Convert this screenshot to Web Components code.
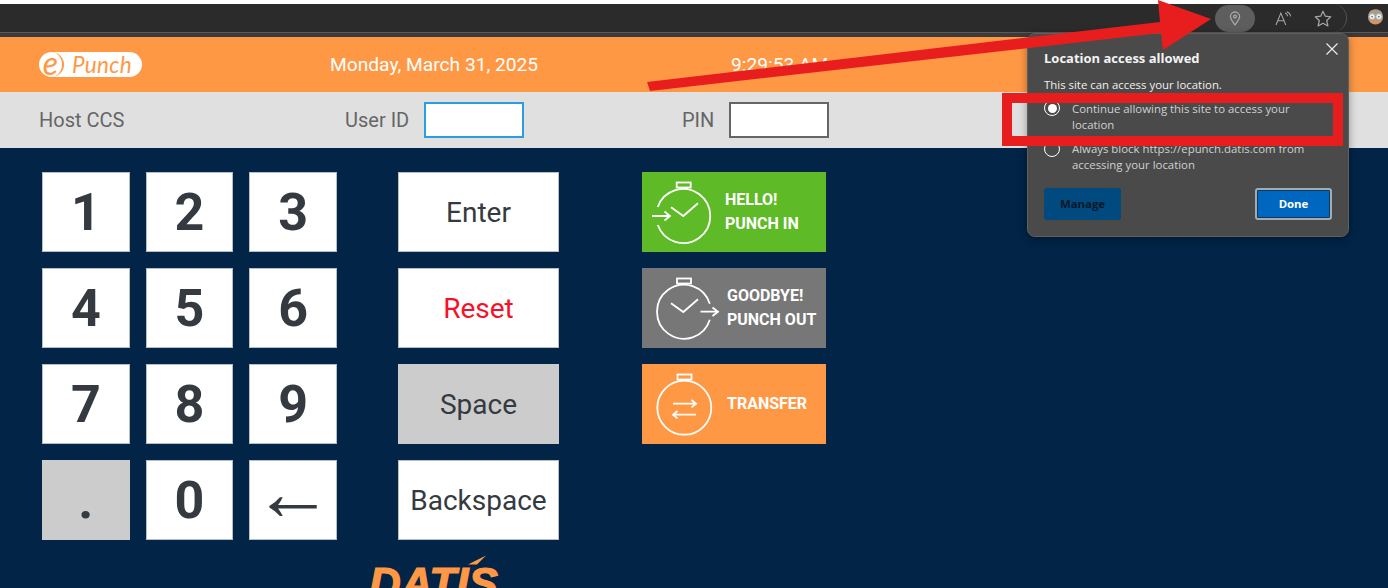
<!DOCTYPE html>
<html><head><meta charset="utf-8">
<style>
html,body{margin:0;padding:0;height:588px;overflow:hidden;background:#012447;font-family:Roboto,sans-serif}
#page{position:relative;height:588px;overflow:hidden}
</style></head><body>
<div id="page">
<x-chrome></x-chrome>
<x-topbar date="Monday, March 31, 2025" time="9:29:53 AM"></x-topbar>
<x-login></x-login>
<x-main>
  <x-keypad slot="keys">
    <x-key big>1</x-key><x-key big>2</x-key><x-key big>3</x-key>
    <x-key big>4</x-key><x-key big>5</x-key><x-key big>6</x-key>
    <x-key big>7</x-key><x-key big>8</x-key><x-key big>9</x-key>
    <x-key big muted dot>.</x-key><x-key big>0</x-key><x-key arrow>←</x-key>
  </x-keypad>
  <x-actions slot="actions">
    <x-key>Enter</x-key><x-key danger>Reset</x-key><x-key muted>Space</x-key><x-key>Backspace</x-key>
  </x-actions>
  <x-punches slot="punches">
    <x-punch kind="in"><span>HELLO!</span><br><span>PUNCH IN</span></x-punch>
    <x-punch kind="out"><span>GOODBYE!</span><br><span>PUNCH OUT</span></x-punch>
    <x-punch kind="transfer"><span>TRANSFER</span></x-punch>
  </x-punches>
</x-main>
<x-brand>DATIS</x-brand>
<x-popup></x-popup>
<x-annot></x-annot>
</div>
<script>
function def(name, html, init){
  customElements.define(name, class extends HTMLElement{
    constructor(){super();this.attachShadow({mode:'open'}).innerHTML=html;}
    connectedCallback(){ if(init) init.call(this,this.shadowRoot); }
  });
}
def('x-chrome',`<style>
:host{display:block;height:37px;background:#3b3b3b;box-sizing:border-box;padding-top:4px;position:relative}
:host::before{content:"";position:absolute;left:0;right:0;top:0;height:4px;background:#fff}
.bar{height:28px;background:#2b2b2b;border-bottom:1px solid #5a5a5a;display:flex;justify-content:flex-end;align-items:center;position:relative}
.omni{height:28px;width:132px;margin-right:41px;border-right:1px solid #555;border-radius:0 14px 14px 0;display:flex;align-items:center;box-sizing:border-box}
.pill{width:40px;height:27px;border-radius:14px;background:#5e5e5e;display:flex;align-items:center;justify-content:center;margin-right:8px}
.ic{display:flex;align-items:center;justify-content:center;width:40px}
.av{position:absolute;left:1367px;top:4px;width:17px;height:18px}
</style><div class="bar"><div class="omni">
<div class="pill"><svg width="12" height="15" viewBox="0 0 12 15" fill="none" stroke="#a8a8a8" stroke-width="1.3"><path d="M6 14C3.6 10.6 1.4 8.2 1.4 5.6a4.6 4.6 0 0 1 9.2 0C10.6 8.2 8.4 10.6 6 14z"/><circle cx="6" cy="5.6" r="1.4"/></svg></div>
<div class="ic"><svg width="17" height="15" viewBox="0 0 18 16" fill="none" stroke="#a8a8a8" stroke-width="1.1"><path d="M1 15 6.2 2.2 11.4 15M3 10.5h6.6"/><path d="M10.6 2.2c1.6.5 2.6 1.8 2.8 3.4M12.4.8c2.2.7 3.8 2.6 4.1 5"/></svg></div>
<div class="ic"><svg width="18" height="17" viewBox="0 0 18 17" fill="none" stroke="#a8a8a8" stroke-width="1.2" stroke-linejoin="round"><path d="M9 1.2 11.3 6.2 16.8 6.8 12.7 10.5 13.9 16 9 13.2 4.1 16 5.3 10.500 1.2 6.8 6.7 6.2z"/></svg></div>
</div>
<svg class="av" viewBox="0 0 18 18"><circle cx="9" cy="9" r="8" fill="#cf9468"/><path d="M1.600 7C2 2.500 5 1 9 1s7 1.500 7.400 6z" fill="#b39a7e"/><circle cx="5.400" cy="8.600" r="3.200" fill="#e6f2f5" stroke="#86aebb" stroke-width=".8"/><circle cx="12.600" cy="8.600" r="3.200" fill="#e6f2f5" stroke="#86aebb" stroke-width=".8"/><circle cx="5.400" cy="8.800" r=".8" fill="#3a4448"/><circle cx="12.600" cy="8.800" r=".8" fill="#3a4448"/></svg>
</div>`);
def('x-topbar',`<style>
:host{display:flex;align-items:center;height:55px;background:#ff9845;color:#fff;font:19.2px/24px Roboto,sans-serif}
.logo{margin-left:39px;width:103px;height:25px;background:#fff;border-radius:13px;display:flex;align-items:center;position:relative;color:#ff9845;font:italic 400 22.5px/25px Lato,sans-serif;letter-spacing:.3px;flex:none;margin-top:-1px}
.e{width:25px;height:25px;box-sizing:border-box;border-right:2px solid #ff9845;border-radius:50%;text-align:center;font:italic 400 32px/22px Lato,sans-serif;margin-right:8px;letter-spacing:0}
.d{margin-left:188px;width:401px;flex:none}
</style><div class="logo"><span class="e">e</span><span>Punch</span></div><span class="d" id="d"></span><span id="t"></span>`,
function(s){s.getElementById('d').textContent=this.getAttribute('date');s.getElementById('t').textContent=this.getAttribute('time');});
def('x-login',`<style>
:host{display:flex;align-items:center;height:56px;background:#e0e0e0;color:#666;font:20px/24px Roboto,sans-serif}
.host{margin-left:39px;width:306px;flex:none}
.u{width:79px;flex:none}.p{margin-left:158px;width:47px;flex:none}
.in{display:block;width:100px;height:36px;box-sizing:border-box;background:#fff;border:2px solid #2a9fe0}
.in.b{border-color:#666}
</style><span class="host">Host CCS</span><span class="u">User ID</span><span class="in"></span><span class="p">PIN</span><span class="in b"></span>`);
def('x-main',`<style>
:host{display:flex;padding:24px 0 0 42px;box-sizing:border-box}
.a{margin-left:61px}.b{margin-left:83px}
</style><slot name="keys"></slot><div class="a"><slot name="actions"></slot></div><div class="b"><slot name="punches"></slot></div>`);
def('x-keypad',`<style>:host{display:grid;grid-template-columns:repeat(3,87.67px);grid-auto-rows:80px;gap:16px}</style><slot></slot>`);
def('x-actions',`<style>:host{display:grid;grid-template-columns:161px;grid-auto-rows:80px;gap:16px}</style><slot></slot>`);
def('x-punches',`<style>:host{display:grid;grid-template-columns:184px;grid-auto-rows:80px;gap:16px}</style><slot></slot>`);
def('x-key',`<style>
:host{display:flex;align-items:center;justify-content:center;box-sizing:border-box;background:#fff;border:1px solid #b9bec4;color:#343a40;font:400 28px/32px Roboto,sans-serif;padding-top:2px}
:host([big]){font:700 52px/60px Roboto,sans-serif}
:host([muted]){background:#ccc;border-color:#ccc}
:host([danger]){color:#f7102a}
:host([arrow]){font:400 80px/60px "Liberation Sans",sans-serif;padding:0 0 14px}
</style><slot></slot>`);
const icons={
in:`<rect x="34.7" y="10.5" width="14" height="5"/><path d="M15.800 35A27 27 0 1 1 15.800 53"/><path d="M29 35.3 41.3 44 56 31.3"/><path d="M10 44H28M22.500 39.500 28 44 22.500 48.500"/>`,
out:`<rect x="35" y="10.500" width="14" height="5"/><path d="M67.800 35.700A27 27 0 1 0 67.800 51.700"/><path d="M29 35.300 41.300 44 56 31.300"/><path d="M58.500 43.700H76M70.500 39.500 76 43.700 70.500 48"/>`,
transfer:`<rect x="35.500" y="10.500" width="14" height="5"/><circle cx="42.300" cy="43.700" r="27"/><path d="M31 39.700H54M49.500 36 54 39.700 49.500 43.400"/><path d="M54 50.700H31M35.500 47 31 50.700 35.500 54.400"/>`};
const bgs={in:'#5fba27',out:'#777777',transfer:'#ff9845'};
const lefts={in:0,out:2,transfer:2};
def('x-punch',`<style>
:host{display:flex;align-items:center;color:#fff;font:700 16px/24px Roboto,sans-serif}
svg{flex:none;display:block}
.l{white-space:nowrap}
</style><svg width="83" height="80" viewBox="0 0 83 80" fill="none" stroke="#fff" stroke-width="1.8" id="s"></svg><div class="l" id="l"><slot></slot></div>`,
function(s){const k=this.getAttribute('kind');this.style.background=bgs[k];s.getElementById('s').innerHTML=icons[k];s.getElementById('l').style.marginLeft=lefts[k]+'px';});
def('x-brand',`<style>
:host{display:block;padding:22px 0 0 369px;color:#ff9845;font:italic 700 44px/44px "Liberation Sans",sans-serif;-webkit-text-stroke:1.2px #ff9845;position:relative}
svg{position:absolute;left:466px;top:15px}
</style><slot></slot><svg width="22" height="11" viewBox="0 0 22 11"><polygon points="2,9.500 20,0.500 11,9.500" fill="#ff9845"/></svg>`);
def('x-popup',`<style>
:host{position:absolute;left:1027px;top:33px;width:322px;height:204px;box-sizing:border-box;background:#4a4a4a;border:1px solid #5f5f5f;border-radius:8px;padding:15px 16px 0;color:#fff;font:400 11.4px/16px "Open Sans",sans-serif;box-shadow:0 2px 8px rgba(0,0,0,.35)}
h1{margin:0;font:700 13px/18px "Open Sans",sans-serif;color:#f3f3f3}
p{margin:10px 0 7px;color:#f0f0f0}
.r{display:flex;gap:12px;color:#d0d0d0;margin-bottom:9px}
.r .t{padding-top:1px}
.r+.r .t{padding-top:0}
.r+.r{margin-top:-1px}
.c{flex:none;width:16px;height:16px;box-sizing:border-box;border:1.5px solid #fff;border-radius:50%;display:flex;align-items:center;justify-content:center}
.c.on::after{content:"";width:9px;height:9px;border-radius:50%;background:#fff}
.x{position:absolute;right:10px;top:9px;display:block}
.btns{display:flex;justify-content:space-between;margin-top:15px}
.btn{width:77px;height:32px;box-sizing:border-box;display:flex;align-items:center;justify-content:center;font-weight:700;border-radius:3px}
.m{background:#004a80;color:#08182a}
.d{background:#0067c0;color:#fff;border:2px solid #a3abb3;box-shadow:inset 0 0 0 1px #0d3c63}
</style>
<svg class="x" width="12" height="12" viewBox="0 0 12 12" stroke="#f0f0f0" stroke-width="1.1"><path d="M.5.5 11.5 11.5M11.5.5.5 11.5"/></svg>
<h1>Location access allowed</h1>
<p>This site can access your location.</p>
<div class="r"><span class="c on"></span><span class="t">Continue allowing this site to access your<br>location</span></div>
<div class="r"><span class="c"></span><span class="t">Always block https://epunch.datis.com from<br>accessing your location</span></div>
<div class="btns"><span class="btn m">Manage</span><span class="btn d">Done</span></div>`);
def('x-annot',`<style>:host{position:absolute;inset:0;pointer-events:none;display:block}svg{position:absolute;left:0;top:0}</style>
<svg width="1388" height="588" viewBox="0 0 1388 588"><polygon points="647,82 1160,22 1158,0 1211,19 1163,50 1161,33 650,91" fill="#e81e1e"/><path d="M1007 98H1338V141H1007Z" fill="none" stroke="#e81e1e" stroke-width="10"/></svg>`);
</script>
</body></html>
